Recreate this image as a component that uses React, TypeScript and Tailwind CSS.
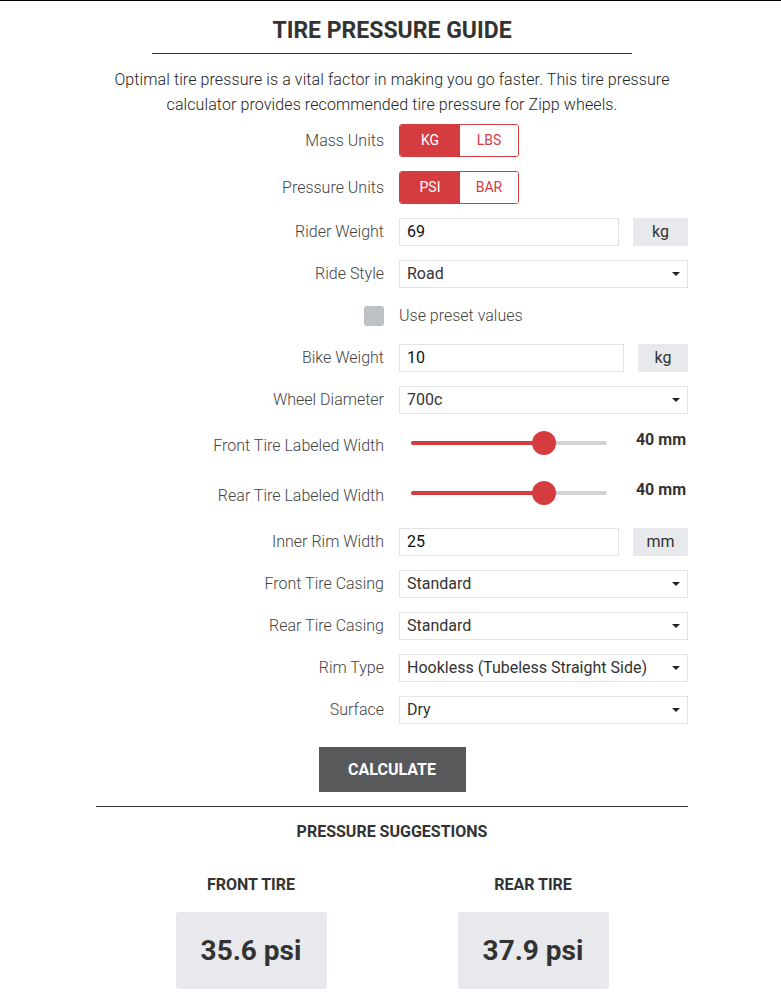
import React from "react"

function Label({ children }: { children: React.ReactNode }) {
    return <div className="w-[288px] shrink-0 text-right text-[16px] font-light text-[#444]">{children}</div>
}

function Caret() {
    return (
        <svg width="8" height="4" viewBox="0 0 8 4" className="shrink-0">
            <path d="M0 0h8L4 4z" fill="#222" />
        </svg>
    )
}

function Toggle({ on, off }: { on: string; off: string }) {
    return (
        <div className="flex h-[33px] w-[120px] overflow-hidden rounded-[3px] border border-[#d53c3f] text-[14px]">
            <div className="flex w-[60px] items-center justify-center bg-[#d53c3f] text-white">{on}</div>
            <div className="flex flex-1 items-center justify-center bg-white text-[#d53c3f]">{off}</div>
        </div>
    )
}

function Select({ value }: { value: string }) {
    return (
        <div className="flex h-[28px] w-[289px] items-center justify-between border border-[#e4e4e4] bg-white pl-[7px] pr-[7px] text-[16px] text-[#333]">
            <span>{value}</span>
            <Caret />
        </div>
    )
}

function NumberInput({ value, unit, inputW, unitW }: { value: string; unit: string; inputW: string; unitW: string }) {
    return (
        <div className="flex w-[289px] items-center justify-between">
            <div className={`flex h-[28px] items-center border border-[#e4e4e4] bg-white pl-[7px] text-[16px] text-[#111] ${inputW}`}>{value}</div>
            <div className={`flex h-[28px] items-center justify-center bg-[#e8e9ec] text-[16px] text-[#333] ${unitW}`}>{unit}</div>
        </div>
    )
}

function Slider({ pct, value }: { pct: number; value: string }) {
    return (
        <div className="flex w-[289px] items-center pb-[6px]">
            <div className="relative ml-[12px] h-[4px] w-[196px] rounded-full bg-[#d3d3d6]">
                <div className="h-full rounded-full bg-[#d53c3f]" style={{ width: `${pct}%` }} />
                <div
                    className="absolute top-1/2 h-[24px] w-[24px] -translate-x-1/2 -translate-y-1/2 rounded-full bg-[#d53c3f]"
                    style={{ left: `${pct}%` }}
                />
            </div>
            <div className="mb-[6px] ml-auto mr-[2px] text-[16px] font-bold text-[#333]">{value}</div>
        </div>
    )
}

export default function App() {
    return (
        <div className="min-h-[1004px] border-t border-black bg-white font-['Roboto','Liberation_Sans',sans-serif] text-[#333]">
            <div className="ml-[96px] w-[592px] pb-[15px]">
                <h1 className="mt-[15px] text-center text-[23px] leading-[30px] font-bold text-[#333]">TIRE PRESSURE GUIDE</h1>
                <div className="mx-auto mt-[7px] h-px w-[480px] bg-[#333]" />
                <p className="mt-[13px] text-center text-[16px] leading-[25px] font-light tracking-[0.1px] text-[#222]">
                    Optimal tire pressure is a vital factor in making you go faster. This tire pressure calculator provides recommended tire pressure for Zipp wheels.
                </p>

                <div className="mt-[7px] flex flex-col gap-[14px]">
                    <div className="flex items-center gap-[15px]">
                        <Label>Mass Units</Label>
                        <Toggle on="KG" off="LBS" />
                    </div>
                    <div className="flex items-center gap-[15px]">
                        <Label>Pressure Units</Label>
                        <Toggle on="PSI" off="BAR" />
                    </div>
                    <div className="flex h-[28px] items-center gap-[15px]">
                        <Label>Rider Weight</Label>
                        <NumberInput value="69" unit="kg" inputW="w-[220px]" unitW="w-[55px]" />
                    </div>
                    <div className="flex h-[28px] items-center gap-[15px]">
                        <Label>Ride Style</Label>
                        <Select value="Road" />
                    </div>
                    <div className="flex h-[28px] items-center gap-[15px]">
                        <div className="flex w-[288px] shrink-0 justify-end">
                            <div className="h-[20px] w-[20px] rounded-[3px] bg-[#bdc0c4]" />
                        </div>
                        <div className="text-[16px] font-light text-[#444]">Use preset values</div>
                    </div>
                    <div className="flex h-[28px] items-center gap-[15px]">
                        <Label>Bike Weight</Label>
                        <NumberInput value="10" unit="kg" inputW="w-[225px]" unitW="w-[50px]" />
                    </div>
                    <div className="flex h-[28px] items-center gap-[15px]">
                        <Label>Wheel Diameter</Label>
                        <Select value="700c" />
                    </div>
                    <div className="flex h-[36px] items-center gap-[15px]">
                        <Label>Front Tire Labeled Width</Label>
                        <Slider pct={68} value="40 mm" />
                    </div>
                    <div className="flex h-[36px] items-center gap-[15px]">
                        <Label>Rear Tire Labeled Width</Label>
                        <Slider pct={68} value="40 mm" />
                    </div>
                    <div className="flex h-[28px] items-center gap-[15px]">
                        <Label>Inner Rim Width</Label>
                        <NumberInput value="25" unit="mm" inputW="w-[220px]" unitW="w-[55px]" />
                    </div>
                    <div className="flex h-[28px] items-center gap-[15px]">
                        <Label>Front Tire Casing</Label>
                        <Select value="Standard" />
                    </div>
                    <div className="flex h-[28px] items-center gap-[15px]">
                        <Label>Rear Tire Casing</Label>
                        <Select value="Standard" />
                    </div>
                    <div className="flex h-[28px] items-center gap-[15px]">
                        <Label>Rim Type</Label>
                        <Select value="Hookless (Tubeless Straight Side)" />
                    </div>
                    <div className="flex h-[28px] items-center gap-[15px]">
                        <Label>Surface</Label>
                        <Select value="Dry" />
                    </div>
                </div>

                <div className="mt-[23px] flex justify-center">
                    <button className="h-[45px] w-[147px] bg-[#58595b] text-[16px] font-bold text-white">CALCULATE</button>
                </div>

                <div className="mt-[14px] h-px bg-[#333]" />

                <h2 className="mt-[13px] text-center text-[16px] leading-[24px] font-bold text-[#333]">PRESSURE SUGGESTIONS</h2>

                <div className="mx-auto mt-[29px] grid w-[564px] grid-cols-2">
                    <div className="flex flex-col items-center">
                        <div className="text-[16px] leading-[24px] font-bold text-[#333]">FRONT TIRE</div>
                        <div className="mt-[15px] flex h-[77px] w-[151px] items-center justify-center rounded-[3px] bg-[#e8e9ec] text-[28px] font-bold text-[#333]">35.6 psi</div>
                    </div>
                    <div className="flex flex-col items-center">
                        <div className="text-[16px] leading-[24px] font-bold text-[#333]">REAR TIRE</div>
                        <div className="mt-[15px] flex h-[77px] w-[151px] items-center justify-center rounded-[3px] bg-[#e8e9ec] text-[28px] font-bold text-[#333]">37.9 psi</div>
                    </div>
                </div>
            </div>
        </div>
    )
}
